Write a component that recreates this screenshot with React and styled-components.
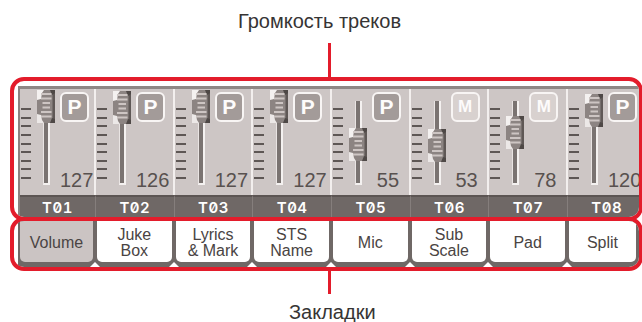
import React from 'react';
import styled, { createGlobalStyle } from 'styled-components';

const RED = '#e31c2b';
const DARK = '#6f6866';

const channels = [
  { name: 'T01', value: 127, mode: 'P' },
  { name: 'T02', value: 126, mode: 'P' },
  { name: 'T03', value: 127, mode: 'P' },
  { name: 'T04', value: 127, mode: 'P' },
  { name: 'T05', value: 55, mode: 'P' },
  { name: 'T06', value: 53, mode: 'M' },
  { name: 'T07', value: 78, mode: 'M' },
  { name: 'T08', value: 120, mode: 'P' },
];

const tabs = [
  ['Volume'],
  ['Juke', 'Box'],
  ['Lyrics', '& Mark'],
  ['STS', 'Name'],
  ['Mic'],
  ['Sub', 'Scale'],
  ['Pad'],
  ['Split'],
];

const GlobalStyle = createGlobalStyle`
  html, body {
    margin: 0;
    padding: 0;
    background: #fff;
    overflow: hidden;
  }
  body {
    font-family: "Liberation Sans", Arial, sans-serif;
  }
`;

const Page = styled.div`
  width: 642px;
  height: 322px;
  overflow: hidden;
  display: flex;
  flex-direction: column;
`;

const Caption = styled.div`
  flex: none;
  font-size: 20px;
  line-height: ${p => p.$lh || 20}px;
  color: #363434;
  white-space: nowrap;
  padding-left: ${p => p.$left}px;
  margin-top: ${p => p.$top}px;
`;

const Stem = styled.div`
  flex: none;
  width: 3px;
  height: ${p => p.$h}px;
  margin-left: ${p => p.$left}px;
  margin-top: ${p => p.$top || 0}px;
  background: ${RED};
`;

const Frame = styled.div`
  flex: none;
  margin-left: 10px;
  width: 633px;
  height: ${p => p.$h}px;
  margin-top: ${p => p.$top || 0}px;
  box-sizing: border-box;
  border: 4px solid ${RED};
  border-radius: 14px;
  padding: ${p => p.$pad};
  overflow: hidden;
  background: #fff;
`;

const Screen = styled.div`
  height: 131px;
  box-sizing: border-box;
  border-left: 2px solid #8a8381;
  border-top: 3px solid #8e8785;
  background: #cdc6c5;
  display: grid;
  grid-template-columns: 76px repeat(7, 78.67px);
`;

const Channel = styled.div`
  display: flex;
  flex-direction: column;
`;

const FaderArea = styled.div`
  height: 106px;
  box-sizing: border-box;
  border-right: 2px solid #f3efee;
  display: flex;
`;

const Ticks = styled.div`
  width: 10px;
  margin-left: 1px;
  margin-top: 19px;
  height: 71px;
  display: flex;
  flex-direction: column;
  justify-content: space-between;
`;

const Tick = styled.div`
  height: 2px;
  background: #5e5755;
`;

const FaderCol = styled.div`
  position: relative;
  width: 18px;
  margin-left: 6px;
`;

const Slot = styled.div`
  width: 4px;
  height: 82px;
  margin-top: 12px;
  margin-left: 6px;
  background: #7a7371;
  border-left: 1px solid #e9e4e3;
  border-right: 2px solid #f4f1f0;
  border-bottom: 2px solid #f4f1f0;
  box-sizing: content-box;
`;

const Knob = styled.svg`
  position: absolute;
  left: 0;
  display: block;
`;

const RightCol = styled.div`
  width: 32px;
  margin-left: 5px;
  display: flex;
  flex-direction: column;
  padding-top: 3px;
`;

const ModeButton = styled.div`
  width: 29px;
  height: 30px;
  box-sizing: border-box;
  border: 2px solid #f8f5f4;
  border-radius: 6px;
  background: ${p => (p.$muted ? '#d8d1cf' : '#a39b99')};
  color: #fdfbfb;
  font-family: "Liberation Sans", Arial, sans-serif;
  font-weight: bold;
  font-size: ${p => (p.$muted ? 17 : 21)}px;
  line-height: 26px;
  text-align: center;
`;

const Value = styled.div`
  margin-top: auto;
  margin-bottom: 5px;
  font-size: 20px;
  line-height: 20px;
  color: #58514f;
  text-align: center;
`;

const TrackLabel = styled.div`
  height: 22px;
  box-sizing: border-box;
  background: ${DARK};
  border-top: 2px solid #5c5553;
  border-right: 1px solid #857e7c;
  padding-top: 2px;
  color: #fff;
  font-family: Inter, "DejaVu Sans", sans-serif;
  font-feature-settings: "zero" 1, "tnum" 1;
  font-weight: 600;
  font-size: 15px;
  line-height: 18px;
  text-align: center;
  letter-spacing: 0.5px;
`;

const TabBar = styled.div`
  height: 46px;
  box-sizing: border-box;
  background: ${DARK};
  border-left: 2px solid ${DARK};
  padding-bottom: 5px;
  display: grid;
  grid-template-columns: 76px repeat(6, 78.67px) 1fr;
`;

const Tab = styled.div`
  position: relative;
  margin: 0 3px 0 ${p => (p.$first ? 0 : 1)}px;
  background: ${p => (p.$active ? '#cbc4c3' : '#fff')};
  border-radius: 0 0 5px 5px;
  display: flex;
  flex-direction: column;
  align-items: center;
  justify-content: center;
  color: #4a4443;
  font-size: 16px;
  line-height: 16px;
  padding-top: 2px;
  box-sizing: border-box;

  ${p => !p.$last && `
    &::after {
      content: "";
      position: absolute;
      z-index: 1;
      right: -8px;
      bottom: -6px;
      width: 0;
      height: 0;
      border-left: 6px solid transparent;
      border-right: 6px solid transparent;
      border-bottom: 6px solid #fff;
    }
  `}
`;

function KnobShape({ top }) {
  const stripes = [3, 7.5, 12, 16.5, 21, 25.5];
  return (
    <Knob width="18" height="33" viewBox="0 0 18 33" style={{ top }}>
      <rect width="18" height="33" fill="#8c8482" />
      <polygon points="0,0 7,0 5,3 4,9 0,10" fill="#f4f1f0" />
      <polygon points="0,24 4,25 5,30 7,33 0,33" fill="#ece8e7" />
      <rect x="15.5" y="0" width="2.5" height="33" fill="#5f5856" />
      <polygon points="13,0 18,0 18,3 15,5" fill="#4e4846" />
      <polygon points="13,33 18,33 18,29 15,28" fill="#4e4846" />
      {stripes.map((y, i) => {
        const inset = i === 2 || i === 3 ? 1.5 : 0;
        return (
          <rect key={y} x={4 + inset} y={y} width={10.5 - inset * 2} height="2" fill="#cdc5c3" />
        );
      })}
    </Knob>
  );
}

function ChannelStrip({ ch }) {
  const knobTop = 1 + (127 - ch.value) * 0.53;
  return (
    <Channel>
      <FaderArea>
        <Ticks>
          {Array.from({ length: 9 }).map((_, i) => <Tick key={i} />)}
        </Ticks>
        <FaderCol>
          <Slot />
          <KnobShape top={knobTop} />
        </FaderCol>
        <RightCol>
          <ModeButton $muted={ch.mode === 'M'}>{ch.mode}</ModeButton>
          <Value>{ch.value}</Value>
        </RightCol>
      </FaderArea>
      <TrackLabel>{ch.name}</TrackLabel>
    </Channel>
  );
}

export default function App() {
  return (
    <Page>
      <GlobalStyle />
      <Caption $left={238} $top={11}>Громкость треков</Caption>
      <Stem $left={328} $top={12} $h={34} />
      <Frame $h={144} $pad="5px 0 0 4px">
        <Screen>
          {channels.map(ch => <ChannelStrip key={ch.name} ch={ch} />)}
        </Screen>
      </Frame>
      <Frame $h={54} $top={-4} $pad="0 0 0 4px">
        <TabBar>
          {tabs.map((lines, i) => (
            <Tab key={lines.join(' ')} $first={i === 0} $last={i === tabs.length - 1} $active={i === 0}>
              {lines.map(l => <span key={l}>{l}</span>)}
            </Tab>
          ))}
        </TabBar>
      </Frame>
      <Stem $left={328} $h={23} />
      <Caption $left={289} $top={10} $lh={16}>Закладки</Caption>
    </Page>
  );
}
